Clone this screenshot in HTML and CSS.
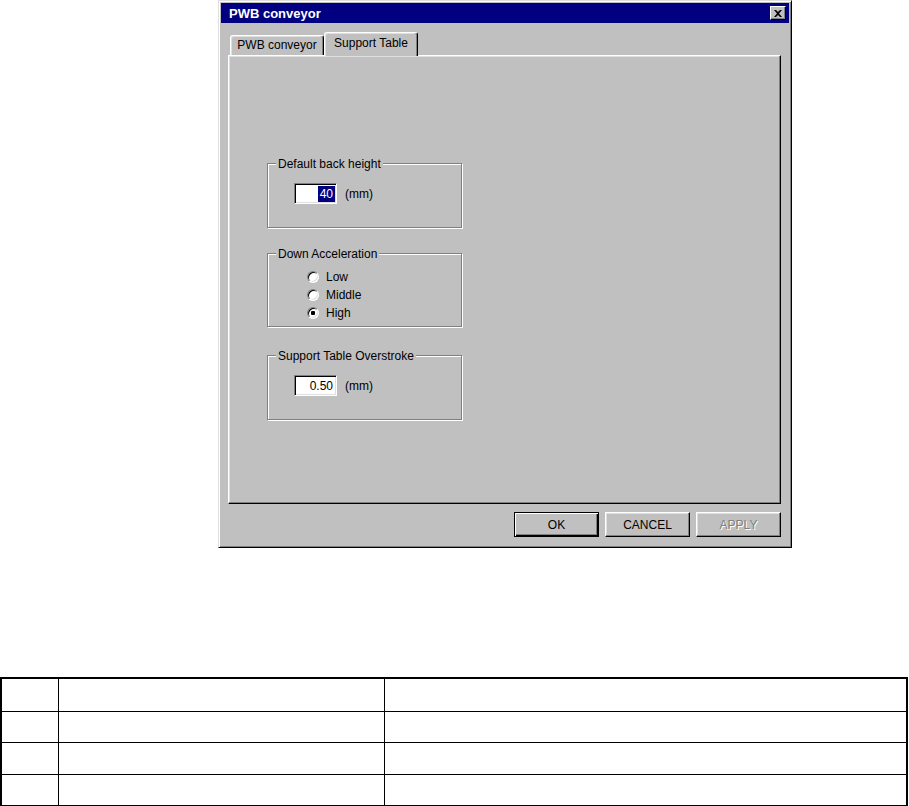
FILE: index.html
```html
<!DOCTYPE html>
<html lang="en">
<head>
    <meta charset="UTF-8">
    <title>PWB conveyor</title>
    <link rel="stylesheet" href="styles.css">
</head>
<body>
    <div class="dialog">
        <div class="titlebar">
            <span class="title">PWB conveyor</span>
            <span class="close-btn">
                <svg width="8" height="7" viewBox="0 0 8 7">
                    <path d="M0 0h2l2 2 2-2h2L5 3.5 8 7H6L4 5 2 7H0l3-3.5z" fill="#000"></path>
                </svg>
            </span>
        </div>

        <div class="tabs">
            <div class="tab">PWB conveyor</div>
            <div class="tab active">Support Table</div>
        </div>

        <div class="tab-panel">
            <div class="group group-back">
                <div class="group-label">Default back height</div>
                <div class="field-row">
                    <span class="edit"><span class="edit-text selected">40</span></span>
                    <span class="unit">(mm)</span>
                </div>
            </div>

            <div class="group group-accel">
                <div class="group-label">Down Acceleration</div>
                <div class="radio-list">
                    <div class="radio-row"><span class="radio"></span>Low</div>
                    <div class="radio-row"><span class="radio"></span>Middle</div>
                    <div class="radio-row"><span class="radio checked"></span>High</div>
                </div>
            </div>

            <div class="group group-over">
                <div class="group-label">Support Table Overstroke</div>
                <div class="field-row">
                    <span class="edit"><span class="edit-text">0.50</span></span>
                    <span class="unit">(mm)</span>
                </div>
            </div>
        </div>

        <div class="buttons">
            <button class="btn default">OK</button>
            <button class="btn">CANCEL</button>
            <button class="btn disabled">APPLY</button>
        </div>
    </div>

    <table class="spec-table">
        <colgroup>
            <col class="col-no">
            <col class="col-item">
            <col>
        </colgroup>
        <tr class="row-head"><td></td><td></td><td></td></tr>
        <tr class="row-a"><td></td><td></td><td></td></tr>
        <tr class="row-b"><td></td><td></td><td></td></tr>
        <tr class="row-c"><td></td><td></td><td></td></tr>
    </table>
</body>
</html>
```

FILE: styles.css
```css
body {
    margin: 0;
    font-family: "Liberation Sans", Arial, sans-serif;
    font-size: 12px;
    color: #000;
    background: #fff;
}
.dialog {
    box-sizing: border-box;
    width: 574px;
    height: 548px;
    margin-left: 218px;
    padding: 2px;
    background: #c0c0c0;
    border: 1px solid;
    border-color: #dfdfdf #000 #000 #dfdfdf;
    box-shadow: inset 1px 1px #fff, inset -1px -1px #808080;
    display: flex;
    flex-direction: column;
}
.titlebar {
    height: 20px;
    background: #000080;
    color: #fff;
    display: flex;
    align-items: center;
    justify-content: space-between;
    padding: 0 3px 0 8px;
}
.title {
    font-weight: bold;
    font-size: 13px;
}
.close-btn {
    box-sizing: border-box;
    width: 16px;
    height: 14px;
    background: #c0c0c0;
    border: 1px solid;
    border-color: #fff #000 #000 #fff;
    box-shadow: inset -1px -1px #808080;
    display: flex;
    align-items: center;
    justify-content: center;
}
.close-btn svg {
    display: block;
}
.tabs {
    display: flex;
    align-items: flex-end;
    height: 23px;
    margin: 9px 8px 0 7px;
    padding-left: 2px;
}
.tab {
    box-sizing: border-box;
    width: 94px;
    height: 20px;
    line-height: 18px;
    text-align: center;
    border: 1px solid;
    border-color: #fff #000 transparent #fff;
    border-bottom: none;
    border-radius: 3px 3px 0 0;
    box-shadow: inset -1px 0 #808080, inset 1px 1px #dfdfdf;
}
.tab.active {
    position: relative;
    height: 24px;
    margin-bottom: -1px;
    line-height: 20px;
    background: #c0c0c0;
}
.tab-panel {
    box-sizing: border-box;
    width: 553px;
    height: 449px;
    margin-left: 7px;
    padding-left: 38px;
    border: 1px solid;
    border-color: #fff #000 #000 #fff;
    box-shadow: inset -1px -1px #808080, inset 1px 1px #dfdfdf;
    overflow: hidden;
}
.group {
    box-sizing: border-box;
    width: 195px;
    border: 1px solid #808080;
    box-shadow: 1px 1px 0 #fff, inset 1px 1px 0 #fff;
}
.group-back {
    height: 65px;
    margin-top: 107px;
}
.group-accel {
    height: 74px;
    margin-top: 25px;
}
.group-over {
    height: 65px;
    margin-top: 28px;
}
.group-label {
    width: fit-content;
    margin: -7px 0 0 8px;
    padding: 0 2px;
    line-height: 14px;
    background: #c0c0c0;
}
.field-row {
    display: flex;
    align-items: center;
    margin-top: 12px;
    padding-left: 26px;
}
.edit {
    box-sizing: border-box;
    width: 43px;
    height: 21px;
    padding-right: 1px;
    background: #fff;
    border: 1px solid;
    border-color: #808080 #fff #fff #808080;
    box-shadow: inset 1px 1px #000, inset -1px -1px #dfdfdf;
    display: flex;
    align-items: center;
    justify-content: flex-end;
}
.edit-text {
    padding: 0 2px;
    line-height: 16px;
}
.edit-text.selected {
    background: #000080;
    color: #fff;
}
.unit {
    margin-left: 8px;
}
.radio-list {
    margin-top: 7px;
    padding-left: 39px;
}
.radio-row {
    display: flex;
    align-items: center;
    gap: 7px;
    height: 18px;
}
.radio {
    box-sizing: border-box;
    width: 12px;
    height: 12px;
    border-radius: 50%;
    border: 1px solid;
    border-color: #808080 #fff #fff #808080;
    box-shadow: inset 1px 1px #000, inset -1px -1px #dfdfdf;
    background: #fff;
}
.radio.checked {
    background: radial-gradient(circle, #000 0 2px, #fff 2.5px);
}
.buttons {
    display: flex;
    justify-content: flex-end;
    gap: 6px;
    margin-top: 8px;
    padding-right: 8px;
}
.btn {
    box-sizing: border-box;
    width: 85px;
    height: 25px;
    padding: 0;
    font-family: "Liberation Sans", Arial, sans-serif;
    font-size: 12px;
    color: #000;
    background: #c0c0c0;
    border: 1px solid;
    border-color: #fff #000 #000 #fff;
    box-shadow: inset -1px -1px #808080, inset 1px 1px #dfdfdf;
}
.btn.default {
    border-color: #000;
    box-shadow: inset 1px 1px #fff, inset -1px -1px #000, inset -2px -2px #808080;
}
.btn.disabled {
    color: #808080;
    text-shadow: 1px 1px 0 #fff;
}
.spec-table {
    width: 908px;
    margin-top: 129px;
    border-collapse: collapse;
    border: 2px solid #000;
}
.spec-table td {
    border: 1px solid #000;
    padding: 0;
}
.col-no {
    width: 57px;
}
.col-item {
    width: 326px;
}
.row-head td {
    height: 32px;
}
.row-a td {
    height: 30px;
}
.row-b td {
    height: 31px;
}
.row-c td {
    height: 30px;
}
```
